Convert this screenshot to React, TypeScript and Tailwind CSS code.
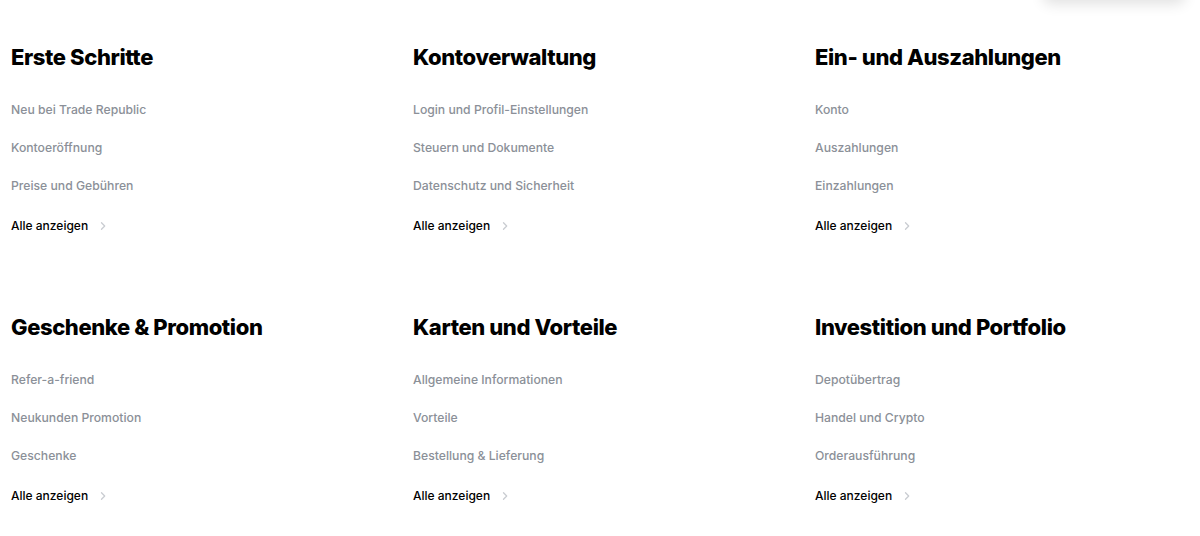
import React from "react";

const sections = [
  { title: "Erste Schritte", links: ["Neu bei Trade Republic", "Kontoeröffnung", "Preise und Gebühren"] },
  { title: "Kontoverwaltung", links: ["Login und Profil-Einstellungen", "Steuern und Dokumente", "Datenschutz und Sicherheit"] },
  { title: "Ein- und Auszahlungen", links: ["Konto", "Auszahlungen", "Einzahlungen"] },
  { title: "Geschenke & Promotion", links: ["Refer-a-friend", "Neukunden Promotion", "Geschenke"] },
  { title: "Karten und Vorteile", links: ["Allgemeine Informationen", "Vorteile", "Bestellung & Lieferung"] },
  { title: "Investition und Portfolio", links: ["Depotübertrag", "Handel und Crypto", "Orderausführung"] },
];

function Chevron() {
  return (
    <svg width="8" height="10" viewBox="0 0 8 10" className="ml-[11px]" fill="none">
      <path d="M2.5 1.8 L5.7 5 L2.5 8.2" stroke="#c9ccd1" strokeWidth="1.3" strokeLinecap="round" strokeLinejoin="round" />
    </svg>
  );
}

export default function App() {
  return (
    <div className="relative w-[1200px] h-[536px] overflow-hidden bg-white" style={{ fontFamily: "Inter, 'Liberation Sans', sans-serif" }}>
      <div className="absolute left-[1043px] top-[-40px] w-[142px] h-[40px] rounded-lg bg-white shadow-[0_4px_14px_rgba(0,0,0,0.12)]" />
      <div className="grid grid-cols-[402px_402px_1fr] gap-y-[77px] pl-[11px] pt-[43px]">
        {sections.map((s) => (
          <div key={s.title} className="flex flex-col">
            <h2 className="text-[22px] leading-[28px] font-extrabold text-black tracking-[-0.4px]">{s.title}</h2>
            <ul className="mt-[29px] flex flex-col gap-[18px]">
              {s.links.map((l) => (
                <li key={l} className="text-[12.2px] leading-[20px] font-medium text-[#8b9098]">{l}</li>
              ))}
              <li className="mt-[2px] flex items-center text-[12px] leading-[20px] font-medium text-black">
                Alle anzeigen
                <Chevron />
              </li>
            </ul>
          </div>
        ))}
      </div>
    </div>
  );
}
